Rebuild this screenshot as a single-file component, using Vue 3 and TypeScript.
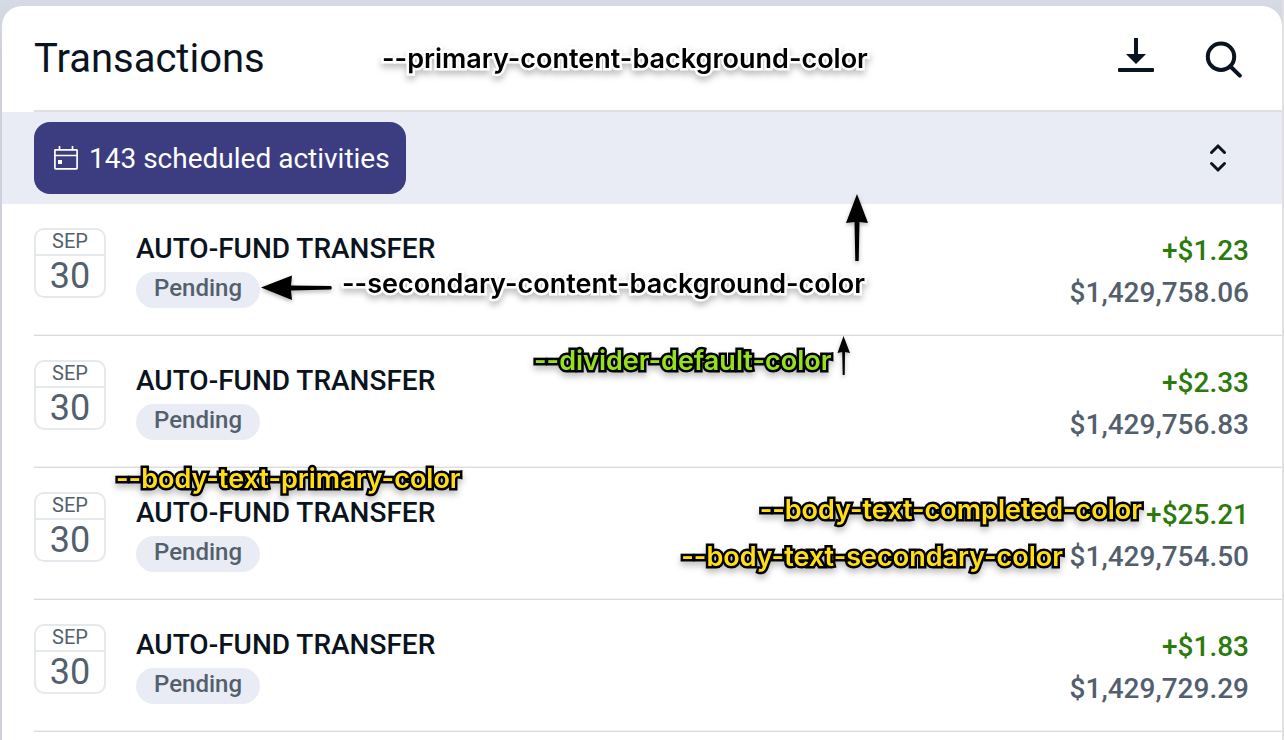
<script setup lang="ts">
interface Transaction {
  id: number
  month: string
  day: string
  title: string
  status: string
  amount: string
  balance: string
}

const transactions: Transaction[] = [
  { id: 1, month: 'SEP', day: '30', title: 'AUTO-FUND TRANSFER', status: 'Pending', amount: '+$1.23', balance: '$1,429,758.06' },
  { id: 2, month: 'SEP', day: '30', title: 'AUTO-FUND TRANSFER', status: 'Pending', amount: '+$2.33', balance: '$1,429,756.83' },
  { id: 3, month: 'SEP', day: '30', title: 'AUTO-FUND TRANSFER', status: 'Pending', amount: '+$25.21', balance: '$1,429,754.50' },
  { id: 4, month: 'SEP', day: '30', title: 'AUTO-FUND TRANSFER', status: 'Pending', amount: '+$1.83', balance: '$1,429,729.29' },
]
</script>

<template>
  <div class="page">
    <main class="card">
      <header class="head">
        <h1>Transactions</h1>
        <div class="actions">
          <button type="button" class="icon-button" aria-label="Download">
            <svg width="40" height="40" viewBox="0 0 40 40">
              <path d="M18 0h4v16h8L20 26 10 16h8z" fill="#0a1420" />
              <rect x="2" y="30" width="36" height="4" rx="1" fill="#0a1420" />
            </svg>
          </button>
          <button type="button" class="icon-button" aria-label="Search">
            <svg width="40" height="40" viewBox="0 0 40 40" fill="none" stroke="#0a1420" stroke-width="4">
              <circle cx="17" cy="18.700" r="13.200" />
              <path d="M26.500 28.500L35.800 37.700" stroke-linecap="round" />
            </svg>
          </button>
        </div>
      </header>

      <section class="band">
        <button type="button" class="scheduled">
          <svg width="24" height="24" viewBox="0 0 24 24" fill="none" stroke="#fff" stroke-width="1.700">
            <rect x="0.900" y="3.900" width="22.200" height="19" rx="0.600" />
            <path d="M1 9.500h22M5.500 0v4M18.500 0v4" />
            <rect x="4" y="14" width="4" height="4" fill="#fff" stroke="none" />
          </svg>
          <span>143 scheduled activities</span>
        </button>
        <button type="button" class="icon-button" aria-label="Expand scheduled activities">
          <svg width="20" height="32" viewBox="0 0 20 32" fill="none" stroke="#0a1420" stroke-width="3" stroke-linecap="round">
            <path d="M3.500 10.500L10 4l6.500 6.500M3.500 21.500L10 28l6.500-6.500" />
          </svg>
        </button>
      </section>

      <ul class="list">
        <li v-for="t in transactions" :key="t.id" class="row">
          <div class="date">
            <span class="month">{{ t.month }}</span>
            <span class="day">{{ t.day }}</span>
          </div>
          <div class="info">
            <span class="title">{{ t.title }}</span>
            <span class="status">{{ t.status }}</span>
          </div>
          <div class="money">
            <span class="amount">{{ t.amount }}</span>
            <span class="balance">{{ t.balance }}</span>
          </div>
        </li>
      </ul>
    </main>

    <span class="note dark n-primary">--primary-content-background-color</span>
    <span class="note dark n-secondary">--secondary-content-background-color</span>
    <span class="note green n-divider">--divider-default-color</span>
    <span class="note yellow n-body-primary">--body-text-primary-color</span>
    <span class="note yellow n-completed">--body-text-completed-color</span>
    <span class="note yellow n-body-secondary">--body-text-secondary-color</span>

    <svg class="arrow a-left" width="72" height="26" viewBox="0 0 72 26">
      <path d="M0 12.500L31 0.500 30 10.500 70 11Q71.500 12.500 70 14.500L30 15.500 31 25z" />
    </svg>
    <svg class="arrow a-band" width="24" height="68" viewBox="0 0 24 68">
      <path d="M12 0L23 29 14.500 28 13.700 67H10.300L9.500 28 1 29z" />
    </svg>
    <svg class="arrow a-divider" width="14" height="40" viewBox="0 0 14 40">
      <path d="M7.500 0L14 17 9 16 8.700 39H6.700L6.200 16 1.500 17z" />
    </svg>
  </div>
</template>

<style>
body {
  margin: 0;
}
</style>

<style scoped>
.page {
  position: relative;
  box-sizing: border-box;
  min-height: 100vh;
  padding: 6px 0 0 2px;
  overflow: hidden;
  background: linear-gradient(#d5dae4, #cdd0dd 60px);
  border-right: 2px solid #e0e0e0;
  font-family: Roboto, "Liberation Sans", sans-serif;
  color: #0a1420;
  display: flex;
}

.card {
  flex: 1;
  background: #fff;
  border-radius: 20px 20px 0 0;
  overflow: hidden;
}

.head {
  display: flex;
  align-items: center;
  justify-content: space-between;
  height: 104px;
  margin-left: 32px;
  padding-right: 38px;
  border-bottom: 2px solid #e0e0e0;
}

h1 {
  margin: 0;
  padding-top: 2px;
  font-size: 40px;
  line-height: 48px;
  font-weight: 400;
}

.actions {
  display: flex;
  gap: 48px;
}

button {
  font: inherit;
  border: 0;
  cursor: pointer;
}

.icon-button {
  display: flex;
  padding: 0;
  background: none;
}

.band {
  display: flex;
  align-items: center;
  justify-content: space-between;
  height: 92px;
  padding: 0 54px 0 32px;
  background: #e9ecf4;
}

.scheduled {
  display: flex;
  align-items: center;
  gap: 11px;
  height: 72px;
  padding: 0 16px 0 20px;
  border-radius: 16px;
  background: #3c3c80;
  color: #fff;
  font-size: 28px;
  line-height: 36px;
}

.scheduled span {
  padding-top: 2px;
}

.list {
  margin: 0;
  padding: 0 0 0 32px;
  list-style: none;
}

.row {
  display: flex;
  box-sizing: border-box;
  height: 132px;
  padding: 24px 33px 0 0;
  border-bottom: 1px solid #dcdddf;
  box-shadow: inset 0 -1px #f1f1f2;
}

.date {
  display: flex;
  flex-direction: column;
  box-sizing: border-box;
  width: 72px;
  height: 70px;
  border: 2px solid #e5e9ed;
  border-radius: 10px;
  color: #545f6e;
  text-align: center;
}

.month {
  padding-bottom: 2px;
  font-size: 20px;
  line-height: 22px;
  border-bottom: 2px solid #e5e9ed;
}

.day {
  font-size: 36px;
  line-height: 40px;
}

.info {
  display: flex;
  flex: 1;
  flex-direction: column;
  align-items: flex-start;
  gap: 2px;
  padding-left: 30px;
}

.title {
  font-size: 28px;
  line-height: 42px;
  font-weight: 500;
}

.status {
  height: 36px;
  padding: 0 18px;
  border-radius: 18px;
  background: #e9ecf4;
  color: #545f6e;
  font-size: 24px;
  line-height: 32px;
  font-weight: 500;
}

.money {
  display: flex;
  flex-direction: column;
  padding-top: 2px;
  text-align: right;
  font-size: 28px;
  line-height: 42px;
  font-weight: 500;
}

.amount {
  color: #2a7a0c;
}

.balance {
  color: #545f6e;
}

.note {
  position: absolute;
  font-family: Inter, "Liberation Sans", sans-serif;
  font-size: 27px;
  line-height: 32px;
  font-weight: 600;
  white-space: nowrap;
  paint-order: stroke fill;
  stroke-linejoin: round;
  filter: drop-shadow(0 4px 3px rgba(0, 0, 0, 0.25));
}

.dark {
  color: #000;
  -webkit-text-stroke: 5px #fff;
}

.green {
  color: #96e01c;
  -webkit-text-stroke: 5px #000;
}

.yellow {
  color: #ffde17;
  -webkit-text-stroke: 5px #000;
}

.n-primary {
  top: 43px;
  left: 382px;
}

.n-secondary {
  top: 268px;
  left: 342px;
}

.n-divider {
  top: 345px;
  left: 534px;
}

.n-body-primary {
  top: 463px;
  left: 116px;
}

.n-completed {
  top: 494px;
  right: 140px;
}

.n-body-secondary {
  top: 541px;
  right: 219px;
}

.arrow {
  position: absolute;
  overflow: visible;
  fill: #000;
  filter: drop-shadow(0 2px 2px rgba(0, 0, 0, 0.3));
}

.a-left {
  top: 275px;
  left: 261px;
}

.a-band {
  top: 194px;
  left: 845px;
}

.a-divider {
  top: 336px;
  left: 836px;
}
</style>
